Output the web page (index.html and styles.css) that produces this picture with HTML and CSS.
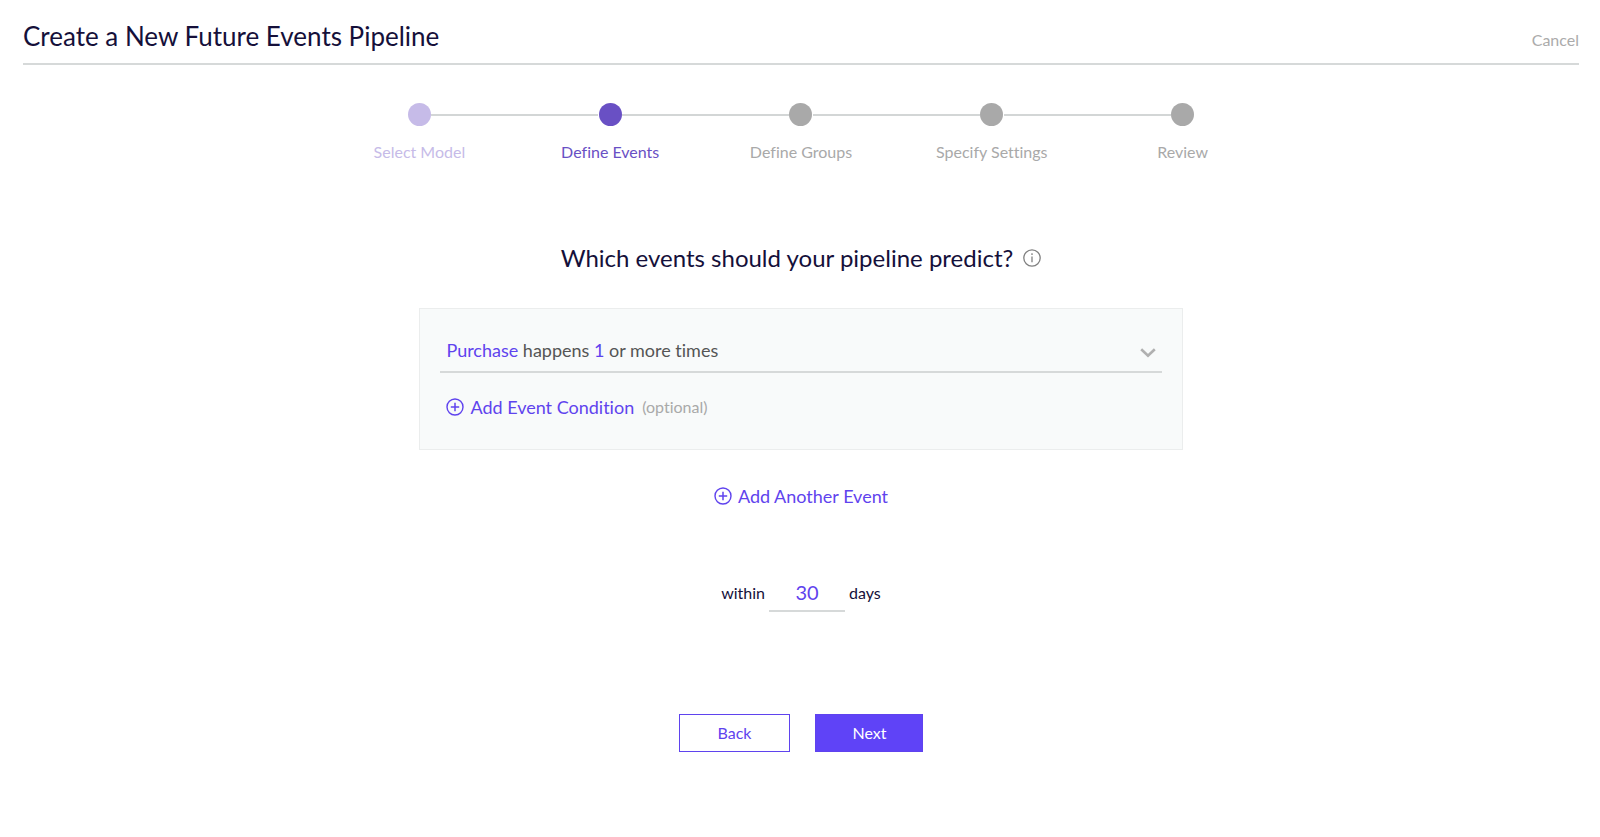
FILE: index.html
```html
<!DOCTYPE html>
<html lang="en">
<head>
    <meta charset="utf-8">
    <meta name="viewport" content="width=device-width, initial-scale=1">
    <title>Create a New Future Events Pipeline</title>
    <link rel="stylesheet" href="styles.css">
</head>
<body>
    <header class="page-header">
        <h1>Create a New Future Events Pipeline</h1>
        <a href="#" class="cancel">Cancel</a>
    </header>

    <main class="wizard">
        <ol class="stepper">
            <li class="step done">Select Model</li>
            <li class="step active" aria-current="step">Define Events</li>
            <li class="step">Define Groups</li>
            <li class="step">Specify Settings</li>
            <li class="step">Review</li>
        </ol>

        <form class="events-form">
            <div class="question">
                <h2>Which events should your pipeline predict?</h2>
                <button type="button" class="info" aria-label="More information">
                    <svg width="18" height="18" viewBox="0 0 18 18" fill="none" stroke="currentColor">
                        <circle cx="9" cy="9" r="8.2" stroke-width="1.3"/>
                        <path d="M9 7.4v5.8" stroke-width="1.3"/>
                        <circle cx="9" cy="5.1" r="0.9" fill="currentColor" stroke="none"/>
                    </svg>
                </button>
            </div>

            <div class="card">
                <button type="button" class="event-row">
                    <span><b>Purchase</b> happens <b>1</b> or more times</span>
                    <svg width="16" height="10" viewBox="0 0 16 10" fill="none" stroke="currentColor" stroke-width="2.6">
                        <path d="M1.2 1.2L8 7.8l6.8-6.6"/>
                    </svg>
                </button>
                <div class="condition">
                    <button type="button" class="add">
                        <svg width="18" height="18" viewBox="0 0 18 18" fill="none" stroke="currentColor">
                            <circle cx="9" cy="9" r="8" stroke-width="1.4"/>
                            <path d="M9 4.8v8.4M4.8 9h8.4" stroke-width="1.5"/>
                        </svg>
                        Add Event Condition
                    </button>
                    <span class="optional">(optional)</span>
                </div>
            </div>

            <button type="button" class="add">
                <svg width="18" height="18" viewBox="0 0 18 18" fill="none" stroke="currentColor">
                    <circle cx="9" cy="9" r="8" stroke-width="1.4"/>
                    <path d="M9 4.8v8.4M4.8 9h8.4" stroke-width="1.5"/>
                </svg>
                Add Another Event
            </button>

            <div class="window">
                <label for="days">within</label>
                <input type="text" id="days" value="30" inputmode="numeric">
                <label for="days">days</label>
            </div>

            <div class="actions">
                <button type="button" class="btn">Back</button>
                <button type="submit" class="btn primary">Next</button>
            </div>
        </form>
    </main>
</body>
</html>
```
FILE: styles.css
```css
* {
    margin: 0;
    padding: 0;
    box-sizing: border-box;
}

body {
    padding: 0 21px 0 23px;
    background: #fff;
    color: #15103a;
    font-family: Lato, "Open Sans", sans-serif;
    font-size: 16px;
    line-height: 24px;
    font-variant-ligatures: none;
}

button,
input {
    font: inherit;
    font-variant-ligatures: none;
    color: inherit;
    background: none;
    border: none;
}

button {
    cursor: pointer;
}

svg {
    display: block;
    flex-shrink: 0;
}

.page-header {
    display: flex;
    justify-content: space-between;
    align-items: flex-end;
    padding: 20px 0 11px;
    border-bottom: 2px solid #d6d9d9;
}

h1 {
    font-size: 26px;
    line-height: 32px;
    font-weight: 400;
}

.cancel {
    color: #ababab;
    text-decoration: none;
}

.wizard {
    max-width: 954px;
    margin: 0 auto;
}

.stepper {
    display: flex;
    padding-top: 38px;
    list-style: none;
}

.step {
    position: relative;
    flex: 1;
    color: #a9a9a9;
    text-align: center;
}

.step::before {
    content: "";
    display: block;
    width: 23px;
    height: 23px;
    margin: 0 auto 14px;
    border-radius: 50%;
    background: #a9a9a9;
}

/* connector to the next dot */
.step:not(:last-child)::after {
    content: "";
    position: absolute;
    top: 11px;
    left: calc(50% + 12px);
    width: calc(100% - 24px);
    height: 2px;
    background: #d3d6d6;
}

.step.done {
    color: #c6bbe8;
}

.step.done::before {
    background: #c6bbe8;
}

.step.active {
    color: #6950c4;
}

.step.active::before {
    background: #6950c4;
}

.events-form {
    display: flex;
    flex-direction: column;
    align-items: center;
    width: 80%;
    margin: 0 auto;
    padding-top: 78px;
}

.question {
    display: flex;
    align-items: center;
    gap: 10px;
}

h2 {
    font-size: 24px;
    line-height: 32px;
    font-weight: 400;
}

.info {
    color: #808080;
}

.card {
    width: 100%;
    margin: 34px 0 33px;
    padding: 24px 20px 29px;
    background: #f8fafa;
    border: 1px solid #ebeded;
}

.event-row {
    display: flex;
    justify-content: space-between;
    align-items: center;
    width: 100%;
    padding: 4px 6px 8px;
    color: #555;
    font-size: 18px;
    line-height: 26px;
    border-bottom: 2px solid #d6d9d9;
}

.event-row b {
    color: #5f43ee;
    font-weight: 400;
}

.event-row svg {
    margin-top: 5px;
    color: #b0b0b0;
}

.condition {
    display: flex;
    align-items: center;
    gap: 8px;
    padding: 21px 6px 0;
}

.add {
    display: flex;
    align-items: center;
    gap: 6px;
    color: #5f43ee;
    font-size: 18px;
    line-height: 26px;
}

.optional {
    color: #a9a9a9;
}

.window {
    display: flex;
    align-items: center;
    gap: 4px;
    margin-top: 65px;
}

.window input {
    width: 76px;
    padding: 6px 0;
    color: #5f43ee;
    font-size: 20px;
    line-height: 24px;
    text-align: center;
    border-bottom: 2px solid #d6d9d9;
}

.actions {
    display: flex;
    gap: 25px;
    margin-top: 102px;
}

.btn {
    padding: 6px 38px;
    color: #5f43ee;
    border: 1px solid #5f43ee;
}

.btn.primary {
    padding: 6px 36px;
    color: #fff;
    background: #5f43f7;
}
```
